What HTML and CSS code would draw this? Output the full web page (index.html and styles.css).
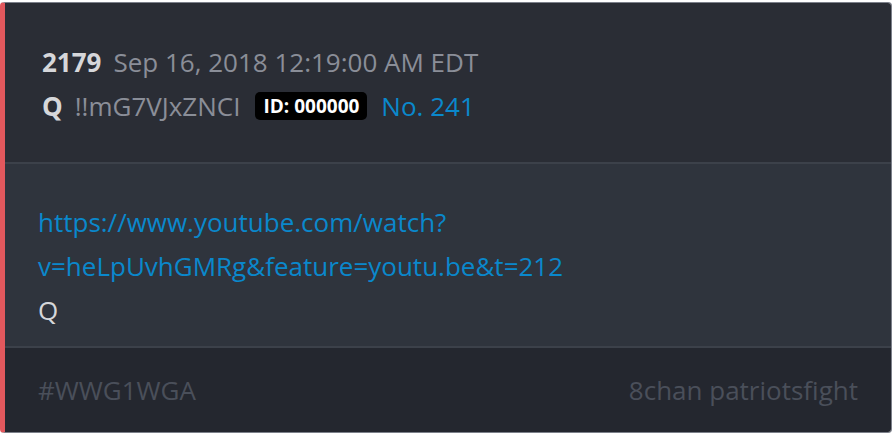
FILE: index.html
```html
<!DOCTYPE html>
<html>
<head>
<meta charset="utf-8">
<link rel="stylesheet" href="styles.css">
</head>
<body>
<div class="card">
  <div class="head">
    <div class="row"><span class="num">2179</span><span class="date">Sep 16, 2018 12:19:00 AM EDT</span></div>
    <div class="row"><span class="name">Q</span><span class="trip">!!mG7VJxZNCI</span><span class="id">ID: 000000</span><span class="no">No. 241</span></div>
  </div>
  <div class="body">
    <a class="link" href="#">https://www.youtube.com/watch?<wbr>v=heLpUvhGMRg&amp;feature=youtu.be&amp;t=212</a>
    <div class="sig">Q</div>
  </div>
  <div class="foot">
    <span class="tag">#WWG1WGA</span>
    <span class="src">8chan patriotsfight</span>
  </div>
</div>
</body>
</html>
```
FILE: styles.css
```css
html, body { margin: 0; padding: 0; background: #ffffff; }
body { font-family: "Open Sans", "DejaVu Sans", sans-serif; }
.card {
  margin: 2px 2px 1px 0;
  height: 429px;
  border: 1px solid #7c808a;
  border-left: 5px solid #e2585d;
  border-radius: 4px;
  overflow: hidden;
  display: flex;
  flex-direction: column;
}
.head {
  background: #2a2d35;
  height: 161px;
  box-sizing: border-box;
  padding: 37px 0 0 37px;
  border-bottom: 2px solid #3c414a;
  display: flex;
  flex-direction: column;
}
.row { display: flex; align-items: center; height: 44px; font-size: 26px; }
.num { font-weight: 700; color: #d6d7da; margin-right: 12px; }
.date { color: #8a8e98; }
.name { font-weight: 700; color: #d6d7da; margin-right: 12px; }
.trip { color: #8a8e98; margin-right: 15px; }
.id {
  background: #000; color: #fff; font-weight: 700; font-size: 19px;
  padding: 3px 8px; border-radius: 5px; margin-right: 14px; line-height: 22px;
}
.no { color: #0a88cc; }
.body {
  background: #2f343d;
  height: 184px;
  box-sizing: border-box;
  padding: 36px 60px 0 33px;
  border-bottom: 2px solid #3c414a;
  font-size: 26px;
  line-height: 44px;
}
.link { color: #0a88cc; text-decoration: none; display: block; max-width: 600px; }
.sig { color: #d6d7da; }
.foot {
  flex: 1;
  background: #24272f;
  display: flex;
  justify-content: space-between;
  align-items: center;
  padding: 0 33px 0 33px;
  font-size: 26px;
  color: #4a4f5a;
}
```
